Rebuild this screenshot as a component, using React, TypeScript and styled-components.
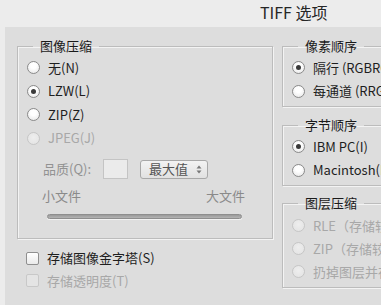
import React from "react";
import styled, { createGlobalStyle } from "styled-components";

const Global = createGlobalStyle`
  html, body { margin: 0; padding: 0; }
  body {
    width: 381px;
    height: 305px;
    overflow: hidden;
    background: #ececec;
    font-family: "Noto Sans CJK SC", "Noto Sans", sans-serif;
    font-size: 13px;
    color: #1e1e1e;
  }
`;

const Window = styled.div`
  width: 381px;
  height: 305px;
  display: flex;
  flex-direction: column;
  overflow: hidden;
`;

const TitleBar = styled.div`
  height: 27px;
  flex: none;
  display: flex;
  align-items: flex-start;
  padding-left: 260px;
  background: #ececec;
  box-sizing: border-box;
`;

const Title = styled.span`
  font-size: 16px;
  line-height: 24px;
  color: #262626;
  white-space: nowrap;
`;

const Panel = styled.div`
  flex: 1;
  margin-left: 5px;
  background: #dddddd;
  padding: 11px 0 0 12px;
  display: flex;
  gap: 9px;
  align-items: flex-start;
`;

const Column = styled.div`
  display: flex;
  flex-direction: column;
  flex: none;
`;

const Group = styled.fieldset<{ $w: number; $pt?: number; $pb?: number; $gap?: number }>`
  margin: ${(p) => p.$gap ?? 0}px 0 0 0;
  box-sizing: border-box;
  width: ${(p) => p.$w}px;
  min-width: 0;
  padding: ${(p) => p.$pt ?? 2}px 9px ${(p) => p.$pb ?? 3}px 9px;
  border: 1px solid #bcbcbc;
  box-shadow: inset 1px 1px 0 #f3f3f3, 1px 1px 0 #f3f3f3;
  border-radius: 0;
`;

const Legend = styled.legend`
  margin-left: 6px;
  padding: 0 7px;
  font-size: 13px;
  line-height: 16px;
  color: #1a1a1a;
`;

const Row = styled.div<{ $h?: number; $disabled?: boolean }>`
  display: flex;
  align-items: center;
  gap: 8px;
  height: ${(p) => p.$h ?? 23.5}px;
  white-space: nowrap;
  color: ${(p) => (p.$disabled ? "#a8a8a8" : "#1e1e1e")};
  line-height: 16px;
`;

const Radio = styled.span<{ $checked?: boolean; $disabled?: boolean }>`
  flex: none;
  width: 13px;
  height: 13px;
  box-sizing: border-box;
  border-radius: 50%;
  border: 1px solid ${(p) => (p.$disabled ? "#c6c6c6" : "#8a8a8a")};
  background: ${(p) =>
    p.$disabled
      ? "radial-gradient(circle at 50% 40%, #eeeeee, #e2e2e2)"
      : "radial-gradient(circle at 50% 35%, #ffffff 30%, #e4e4e4)"};
  display: flex;
  align-items: center;
  justify-content: center;
  &::after {
    content: "";
    display: ${(p) => (p.$checked ? "block" : "none")};
    width: 5px;
    height: 5px;
    border-radius: 50%;
    background: #3a3a3a;
  }
`;

const Check = styled.span<{ $disabled?: boolean }>`
  flex: none;
  width: 13px;
  height: 13px;
  box-sizing: border-box;
  border-radius: 2px;
  border: 1px solid ${(p) => (p.$disabled ? "#c8c8c8" : "#8f8f8f")};
  background: ${(p) =>
    p.$disabled ? "#e4e4e4" : "linear-gradient(#ffffff, #eaeaea)"};
`;

const QualityRow = styled.div`
  display: flex;
  align-items: center;
  height: 20px;
  margin: 9px 0 0 16px;
  white-space: nowrap;
`;

const MutedLabel = styled.span`
  color: #929292;
  line-height: 16px;
`;

const NumberBox = styled.span`
  width: 25px;
  height: 20px;
  box-sizing: border-box;
  margin-left: 12px;
  border: 1px solid #c4c4c4;
  background: #ebebeb;
`;

const SelectBox = styled.span`
  width: 68px;
  height: 19px;
  box-sizing: border-box;
  margin-left: 12px;
  border: 1px solid #a8a8a8;
  border-radius: 3px;
  background: linear-gradient(#f3f3f3, #e1e1e1);
  display: flex;
  align-items: center;
  justify-content: space-between;
  padding: 0 5px 0 8px;
  color: #555555;
  line-height: 16px;
`;

const EndsRow = styled.div`
  display: flex;
  justify-content: space-between;
  height: 15px;
  margin: 9px 18px 0 15px;
  line-height: 15px;
  color: #8a8a8a;
`;

const Track = styled.div`
  height: 5px;
  margin: 11px 21px 19px 20px;
  box-sizing: border-box;
  border: 1px solid #8e8e8e;
  border-radius: 3px;
  background: linear-gradient(#9a9a9a, #b4b4b4);
  box-shadow: 0 1px 0 #f2f2f2;
`;

const CheckList = styled.div`
  margin-top: 8px;
  padding-left: 9px;
`;

const Spinner = () => (
  <svg width="6" height="9" viewBox="0 0 6 9">
    <path d="M3 0.5 L5.5 3.5 H0.5 Z" fill="#777" />
    <path d="M3 8.5 L5.5 5.5 H0.5 Z" fill="#777" />
  </svg>
);

type Opt = { label: string; checked?: boolean; disabled?: boolean };

const RadioList = ({ items, h }: { items: Opt[]; h?: number }) => (
  <>
    {items.map((it) => (
      <Row key={it.label} $h={h} $disabled={it.disabled}>
        <Radio $checked={it.checked} $disabled={it.disabled} />
        <span>{it.label}</span>
      </Row>
    ))}
  </>
);

export default function App() {
  return (
    <Window>
      <Global />
      <TitleBar>
        <Title>TIFF 选项</Title>
      </TitleBar>
      <Panel>
        <Column>
          <Group $w={256} $pb={0}>
            <Legend>图像压缩</Legend>
            <RadioList
              items={[
                { label: "无(N)" },
                { label: "LZW(L)", checked: true },
                { label: "ZIP(Z)" },
                { label: "JPEG(J)", disabled: true },
              ]}
            />
            <QualityRow>
              <MutedLabel>品质(Q):</MutedLabel>
              <NumberBox />
              <SelectBox>
                <span>最大值</span>
                <Spinner />
              </SelectBox>
            </QualityRow>
            <EndsRow>
              <span>小文件</span>
              <span>大文件</span>
            </EndsRow>
            <Track />
          </Group>
          <CheckList>
            <Row $h={22.5}>
              <Check />
              <span>存储图像金字塔(S)</span>
            </Row>
            <Row $h={22.5} $disabled>
              <Check $disabled />
              <span>存储透明度(T)</span>
            </Row>
          </CheckList>
        </Column>
        <Column>
          <Group $w={220}>
            <Legend>像素顺序</Legend>
            <RadioList
              items={[
                { label: "隔行 (RGBRGB)", checked: true },
                { label: "每通道 (RRGGBB)" },
              ]}
            />
          </Group>
          <Group $w={220} $gap={10}>
            <Legend>字节顺序</Legend>
            <RadioList
              items={[
                { label: "IBM PC(I)", checked: true },
                { label: "Macintosh(M)" },
              ]}
            />
          </Group>
          <Group $w={220} $gap={9} $pt={3} $pb={4}>
            <Legend>图层压缩</Legend>
            <RadioList
              h={23}
              items={[
                { label: "RLE（存储较快，文件较大）", disabled: true },
                { label: "ZIP（存储较慢，文件较小）", disabled: true },
                { label: "扔掉图层并存储拷贝", disabled: true },
              ]}
            />
          </Group>
        </Column>
      </Panel>
    </Window>
  );
}
